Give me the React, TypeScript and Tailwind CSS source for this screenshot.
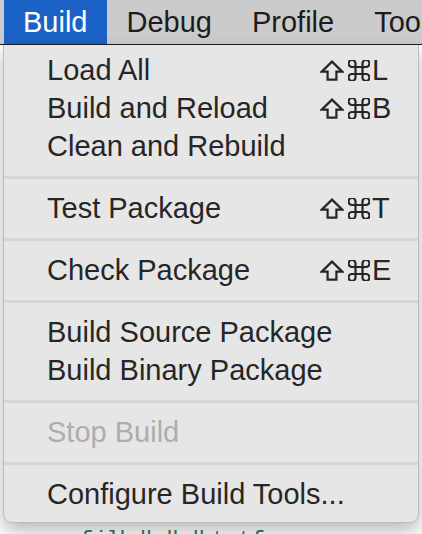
import React from "react";

type Item =
  | { kind: "item"; label: string; keys?: string; disabled?: boolean }
  | { kind: "sep" };

const MENU: Item[] = [
  { kind: "item", label: "Load All", keys: "L" },
  { kind: "item", label: "Build and Reload", keys: "B" },
  { kind: "item", label: "Clean and Rebuild" },
  { kind: "sep" },
  { kind: "item", label: "Test Package", keys: "T" },
  { kind: "sep" },
  { kind: "item", label: "Check Package", keys: "E" },
  { kind: "sep" },
  { kind: "item", label: "Build Source Package" },
  { kind: "item", label: "Build Binary Package" },
  { kind: "sep" },
  { kind: "item", label: "Stop Build", disabled: true },
  { kind: "sep" },
  { kind: "item", label: "Configure Build Tools..." },
];

const TOP = ["Build", "Debug", "Profile", "Tools"];

// ⇧ outlined shift arrow
function ShiftGlyph() {
  return (
    <svg width="24" height="21" viewBox="0 0 24 21" className="shrink-0">
      <path
        d="M12 1.6 L22.3 11.6 H16.4 V19.6 H7.6 V11.6 H1.7 Z"
        fill="none"
        stroke="currentColor"
        strokeWidth="2.2"
        strokeLinejoin="miter"
      />
    </svg>
  );
}

// ⌘ command loop sign
function CmdGlyph() {
  return (
    <svg width="22" height="21" viewBox="3 3 18 18" className="shrink-0">
      <path
        d="M15 6v12a3 3 0 1 0 3-3H6a3 3 0 1 0 3 3V6a3 3 0 1 0-3 3h12a3 3 0 1 0-3-3"
        fill="none"
        stroke="currentColor"
        strokeWidth="1.9"
      />
    </svg>
  );
}

function Shortcut({ letter }: { letter: string }) {
  return (
    <span className="flex w-[72px] items-center">
      <ShiftGlyph />
      <span className="w-[4px]" />
      <CmdGlyph />
      <span className="ml-[2px]">{letter}</span>
    </span>
  );
}

export default function App() {
  return (
    <div className="relative h-[534px] w-[422px] overflow-hidden bg-[#f4f4f4] font-['Liberation_Sans',Arial,sans-serif]">
      {/* Menu bar */}
      <div className="flex h-[45px] items-stretch border-b border-[#1e1e1e] bg-[#cbcbcb] pl-[4px] text-[29px] leading-[44px] text-[#1c1c1c]">
        {TOP.map((t, i) => (
          <div
            key={t}
            className={
              i === 0
                ? "whitespace-nowrap bg-[#1b61c6] px-[19px] text-white"
                : "whitespace-nowrap px-[20px]"
            }
          >
            {t}
          </div>
        ))}
      </div>

      {/* Editor content behind the menu */}
      <div className="bg-white pl-[80px] pt-[482px] font-['Liberation_Mono',monospace] text-[22px] leading-[28px] text-[#2f7b57]">
        fjlbdbdbdbtstf
      </div>

      {/* Dropdown */}
      <div className="absolute left-[3px] top-[45px] w-[416px] rounded-b-[9px] border border-t-0 border-[#bdbdbd] bg-[#e6e6e7] pb-[9px] pt-[6px] text-[29px] text-[#262626] shadow-[0_8px_18px_rgba(0,0,0,0.28)]">
        {MENU.map((it, i) =>
          it.kind === "sep" ? (
            <div key={i} className="flex h-[24px] items-center">
              <div className="h-[3px] w-full bg-[#d5d5d6]" />
            </div>
          ) : (
            <div
              key={i}
              className={
                "flex h-[38px] items-center pl-[43px] pr-[26px] leading-[38px] " +
                (it.disabled ? "text-[#adadad]" : "")
              }
            >
              <span className="flex-1 whitespace-nowrap">{it.label}</span>
              {it.keys && <Shortcut letter={it.keys} />}
            </div>
          )
        )}
      </div>
    </div>
  );
}
